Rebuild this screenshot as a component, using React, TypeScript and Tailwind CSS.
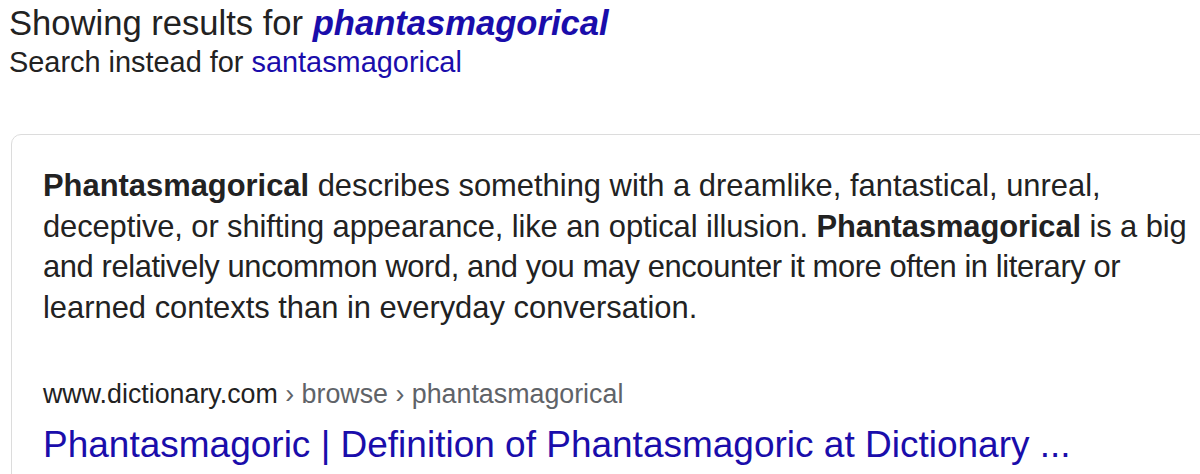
export default function App() {
    return (
        <div className="h-[474px] w-[1200px] overflow-hidden bg-white font-['Liberation_Sans',Arial,sans-serif] text-[#222]">
            <div className="pl-[9px] pt-[3px]">
                <p className="whitespace-nowrap text-[34.6px] leading-[40px]">
                    Showing results for{' '}
                    <a className="font-bold italic text-[#1a0dab]">phantasmagorical</a>
                </p>
                <p className="mt-[1px] whitespace-nowrap text-[28.9px] leading-[36px]">
                    Search instead for <a className="text-[#1a0dab]">santasmagorical</a>
                </p>
            </div>

            <div className="ml-[11px] mt-[54px] w-[1220px] rounded-[10px] border border-[#dcdcdc] pb-[60px] pl-[31px] pt-[31px]">
                <p className="whitespace-nowrap text-[30.9px] leading-[40.6px]">
                    <b>Phantasmagorical</b> describes something with a dreamlike, fantastical, unreal,
                    <br />
                    <span className="tracking-[-0.1px]">
                        deceptive, or shifting appearance, like an optical illusion. <b>Phantasmagorical</b> is a big
                    </span>
                    <br />
                    <span className="tracking-[-0.4px]">
                        and relatively uncommon word, and you may encounter it more often in literary or
                    </span>
                    <br />
                    learned contexts than in everyday conversation.
                </p>

                <div className="mt-[50px] whitespace-nowrap text-[26.8px] leading-[32px]">
                    <span className="text-[#222]">www.dictionary.com</span>
                    <span className="text-[#5f6368]"> › browse › phantasmagorical</span>
                </div>
                <a className="mt-[13px] block whitespace-nowrap text-[37px] leading-[44px] text-[#1a0dab]">
                    Phantasmagoric | Definition of Phantasmagoric at Dictionary ...
                </a>
            </div>
        </div>
    );
}
